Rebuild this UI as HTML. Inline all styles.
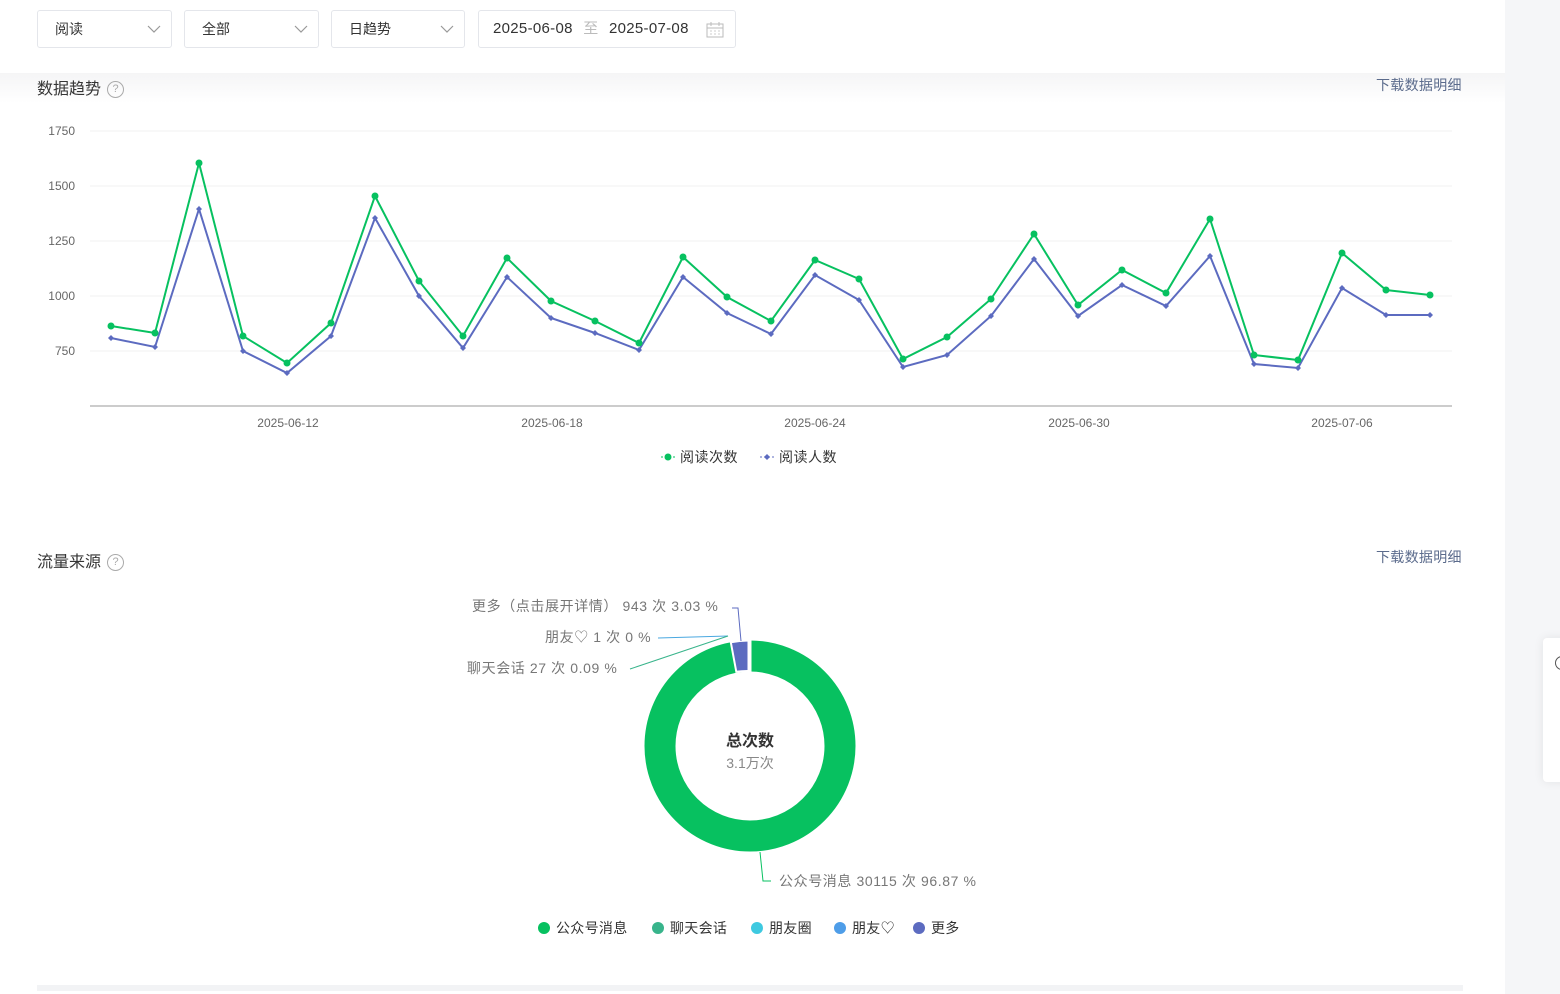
<!DOCTYPE html>
<html><head><meta charset="utf-8"><style>
*{margin:0;padding:0;box-sizing:border-box}
body{width:1560px;height:994px;background:#f5f6f8;font-family:"Liberation Sans","Noto Sans CJK SC",sans-serif;position:relative;overflow:hidden}
.panel{position:absolute;left:0;top:0;width:1505px;height:994px;background:#fff}
.sel{position:absolute;top:10px;height:38px;border:1px solid #e4e6eb;border-radius:3px;font-size:14px;color:#333;line-height:36px;padding-left:17px}
.sel svg{position:absolute;right:10px;top:13px}
.band{position:absolute;left:0;top:73px;width:1505px;height:30px;background:linear-gradient(#f5f5f6,#fff)}
.title{position:absolute;left:37px;font-size:16px;color:#353535}
.q{display:inline-block;width:17px;height:17px;border:1px solid #aaa;border-radius:50%;font-size:11px;color:#aaa;text-align:center;line-height:15px;vertical-align:2px;margin-left:6px}
.dl{position:absolute;left:1376px;font-size:14px;color:#5b6b8c;letter-spacing:0.3px}
.lbl{position:absolute;font-size:14px;color:#777;white-space:nowrap;letter-spacing:0.6px}
.leg{position:absolute;top:918px;font-size:14px;color:#333;white-space:nowrap;letter-spacing:0.3px}
.leg i{display:inline-block;width:12px;height:12px;border-radius:50%;vertical-align:-1px;margin-right:6px}
</style></head><body>
<div class="panel">
<div class="sel" style="left:37px;width:135px">阅读<svg width="14" height="10"><path d="M1 2l6 6 6-6" fill="none" stroke="#999" stroke-width="1.2"/></svg></div>
<div class="sel" style="left:184px;width:135px">全部<svg width="14" height="10"><path d="M1 2l6 6 6-6" fill="none" stroke="#999" stroke-width="1.2"/></svg></div>
<div class="sel" style="left:331px;width:134px">日趋势<svg width="14" height="10"><path d="M1 2l6 6 6-6" fill="none" stroke="#999" stroke-width="1.2"/></svg></div>
<div class="sel" style="left:478px;width:258px;padding-left:14px;font-size:15px;letter-spacing:0.3px">2025-06-08 <span style="color:#bbb;margin:0 6px">至</span> 2025-07-08
<svg width="18" height="16" style="right:11px;top:11px"><rect x="1" y="2" width="16" height="13" fill="none" stroke="#bbb"/><path d="M1 6h16M5 0v4M13 0v4" stroke="#bbb"/><path d="M4 9h2M8 9h2M12 9h2M4 12h2M8 12h2M12 12h2" stroke="#ccc"/></svg></div>
<div class="band"></div>
<div class="title" style="top:75px">数据趋势<span class="q">?</span></div>
<div class="dl" style="top:75px">下载数据明细</div>
<svg style="position:absolute;left:0;top:0" width="1505" height="994">
<g stroke="#f0f0f0"><path d="M90 131H1452M90 186H1452M90 241H1452M90 296H1452M90 351H1452"/></g>
<path d="M90 406H1452" stroke="#ccc" stroke-width="2"/>
<g font-size="12" fill="#666" text-anchor="end" font-family="Liberation Sans"><text x="75" y="135">1750</text><text x="75" y="190">1500</text><text x="75" y="245">1250</text><text x="75" y="300">1000</text><text x="75" y="355">750</text></g>
<g font-size="12" fill="#666" text-anchor="middle" font-family="Liberation Sans"><text x="288" y="427">2025-06-12</text><text x="552" y="427">2025-06-18</text><text x="815" y="427">2025-06-24</text><text x="1079" y="427">2025-06-30</text><text x="1342" y="427">2025-07-06</text></g>
<polyline fill="none" stroke="#5c6bc0" stroke-width="2" points="111,338 155,347 199,209 243,351 287,373 331,336 375,218 419,296 463,348 507,277 551,318 595,333 639,350 683,277 727,313 771,334 815,275 859,300 903,367 947,355 991,316 1034,259 1078,316 1122,285 1166,306 1210,256 1254,364 1298,368 1342,288 1386,315 1430,315"/>
<polyline fill="none" stroke="#07c160" stroke-width="2" points="111,326 155,333 199,163 243,336 287,363 331,323 375,196 419,281 463,336 507,258 551,301 595,321 639,343 683,257 727,297 771,321 815,260 859,279 903,359 947,337 991,299 1034,234 1078,305 1122,270 1166,293 1210,219 1254,355 1298,360 1342,253 1386,290 1430,295"/>
<g fill="#5c6bc0">
<path d="M111 335l3 3-3 3-3-3zM155 344l3 3-3 3-3-3zM199 206l3 3-3 3-3-3zM243 348l3 3-3 3-3-3zM287 370l3 3-3 3-3-3zM331 333l3 3-3 3-3-3zM375 215l3 3-3 3-3-3zM419 293l3 3-3 3-3-3zM463 345l3 3-3 3-3-3zM507 274l3 3-3 3-3-3zM551 315l3 3-3 3-3-3zM595 330l3 3-3 3-3-3zM639 347l3 3-3 3-3-3zM683 274l3 3-3 3-3-3zM727 310l3 3-3 3-3-3zM771 331l3 3-3 3-3-3zM815 272l3 3-3 3-3-3zM859 297l3 3-3 3-3-3zM903 364l3 3-3 3-3-3zM947 352l3 3-3 3-3-3zM991 313l3 3-3 3-3-3zM1034 256l3 3-3 3-3-3zM1078 313l3 3-3 3-3-3zM1122 282l3 3-3 3-3-3zM1166 303l3 3-3 3-3-3zM1210 253l3 3-3 3-3-3zM1254 361l3 3-3 3-3-3zM1298 365l3 3-3 3-3-3zM1342 285l3 3-3 3-3-3zM1386 312l3 3-3 3-3-3zM1430 312l3 3-3 3-3-3z"/></g>
<g fill="#07c160">
<circle cx="111" cy="326" r="3.5"/><circle cx="155" cy="333" r="3.5"/><circle cx="199" cy="163" r="3.5"/><circle cx="243" cy="336" r="3.5"/><circle cx="287" cy="363" r="3.5"/><circle cx="331" cy="323" r="3.5"/><circle cx="375" cy="196" r="3.5"/><circle cx="419" cy="281" r="3.5"/><circle cx="463" cy="336" r="3.5"/><circle cx="507" cy="258" r="3.5"/><circle cx="551" cy="301" r="3.5"/><circle cx="595" cy="321" r="3.5"/><circle cx="639" cy="343" r="3.5"/><circle cx="683" cy="257" r="3.5"/><circle cx="727" cy="297" r="3.5"/><circle cx="771" cy="321" r="3.5"/><circle cx="815" cy="260" r="3.5"/><circle cx="859" cy="279" r="3.5"/><circle cx="903" cy="359" r="3.5"/><circle cx="947" cy="337" r="3.5"/><circle cx="991" cy="299" r="3.5"/><circle cx="1034" cy="234" r="3.5"/><circle cx="1078" cy="305" r="3.5"/><circle cx="1122" cy="270" r="3.5"/><circle cx="1166" cy="293" r="3.5"/><circle cx="1210" cy="219" r="3.5"/><circle cx="1254" cy="355" r="3.5"/><circle cx="1298" cy="360" r="3.5"/><circle cx="1342" cy="253" r="3.5"/><circle cx="1386" cy="290" r="3.5"/><circle cx="1430" cy="295" r="3.5"/></g>
<path d="M661 457h14" stroke="#07c160" stroke-dasharray="2 2"/><circle cx="668" cy="457" r="3.5" fill="#07c160"/>
<text x="680" y="462" font-size="14" fill="#333" font-family="Liberation Sans,Noto Sans CJK SC" letter-spacing="0.5">阅读次数</text>
<path d="M760 457h14" stroke="#5c6bc0" stroke-dasharray="2 2"/><path d="M767 454l3 3-3 3-3-3z" fill="#5c6bc0"/>
<text x="779" y="462" font-size="14" fill="#333" font-family="Liberation Sans,Noto Sans CJK SC" letter-spacing="0.5">阅读人数</text>
<circle cx="750" cy="746" r="90" fill="none" stroke="#07c160" stroke-width="31"/>
<path d="M748.5 640.5 A105.5 105.5 0 0 0 730.8 642.3 L736.3 671.8 A75 75 0 0 1 748.5 671z" fill="#5c6bc0" stroke="#fff" stroke-width="2"/>
<path d="M750 638v36" stroke="#fff" stroke-width="3"/>
<path d="M732 608h6l3 33" fill="none" stroke="#5c6bc0"/>
<path d="M658 638l70-2" fill="none" stroke="#4aa8e0"/>
<path d="M630 669l98-33" fill="none" stroke="#38b48b"/>
<path d="M760 852l3 29h8" fill="none" stroke="#07c160"/>
<text x="750" y="746" text-anchor="middle" font-size="16" font-weight="bold" fill="#333" font-family="Liberation Sans,Noto Sans CJK SC">总次数</text>
<text x="750" y="768" text-anchor="middle" font-size="14" fill="#888" font-family="Liberation Sans,Noto Sans CJK SC">3.1万次</text>
<path d="M37 988H1463" stroke="#f2f3f5" stroke-width="6"/>
</svg>
<div class="title" style="top:548px">流量来源<span class="q">?</span></div>
<div class="dl" style="top:547px">下载数据明细</div>
<div class="lbl" style="left:472px;top:596px">更多（点击展开详情） 943 次 3.03 %</div>
<div class="lbl" style="left:545px;top:627px">朋友♡ 1 次 0 %</div>
<div class="lbl" style="left:467px;top:658px">聊天会话 27 次 0.09 %</div>
<div class="lbl" style="left:779px;top:871px">公众号消息 30115 次 96.87 %</div>
<div class="leg" style="left:538px"><i style="background:#07c160"></i>公众号消息</div>
<div class="leg" style="left:652px"><i style="background:#38b48b"></i>聊天会话</div>
<div class="leg" style="left:751px"><i style="background:#3ec9e0"></i>朋友圈</div>
<div class="leg" style="left:834px"><i style="background:#4e9de8"></i>朋友♡</div>
<div class="leg" style="left:913px"><i style="background:#5c6bc0"></i>更多</div>
</div>
<div style="position:absolute;left:1543px;top:638px;width:40px;height:144px;background:#fff;border-radius:4px;box-shadow:0 0 10px rgba(0,0,0,.08)">
<div style="position:absolute;left:12px;top:18px;width:14px;height:14px;border:1.5px solid #555;border-radius:50%"></div></div>
</body></html>
